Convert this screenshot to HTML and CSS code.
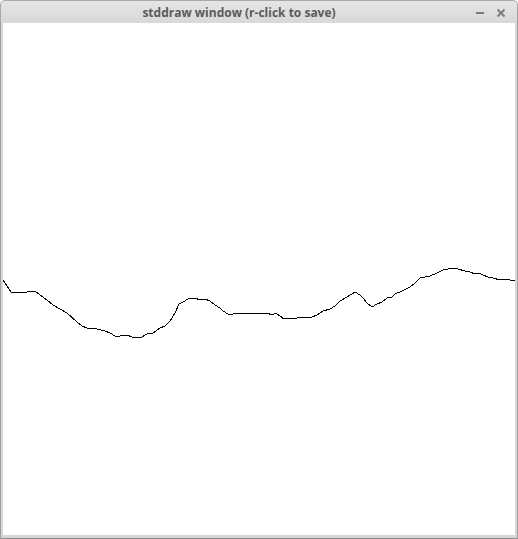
FILE: index.html
```html
<!DOCTYPE html>
<html>
<head>
<meta charset="utf-8">
<link rel="stylesheet" href="styles.css">
</head>
<body>
<div class="window">
  <div class="titlebar">
    <span class="title">stddraw window (r-click to save)</span>
    <div class="controls">
      <svg class="btn" width="10" height="10" viewBox="0 0 10 10"><rect x="1" y="4" width="8" height="2" fill="#7a7a7a"/></svg>
      <svg class="btn" width="10" height="10" viewBox="0 0 10 10"><path d="M1.5 1.5 L8.5 8.5 M8.5 1.5 L1.5 8.5" stroke="#7a7a7a" stroke-width="1.8" fill="none"/></svg>
    </div>
  </div>
  <div class="body">
    <div class="canvas">
      <svg width="512" height="512" viewBox="0 0 512 512" shape-rendering="crispEdges">
        <polyline fill="none" stroke="#000" stroke-width="1" points="0,257 8,269 17,270 24,269 29,268 33,269 44,277 50,282 57,286 64,290 74,299 79,303 84,305 94,306 102,308 107,310 112,313 117,313 124,312 129,314 137,315 144,311 150,310 157,305 162,303 167,298 172,290 176,281 180,279 185,276 192,275 197,277 202,276 207,278 212,282 217,285 220,288 225,291 230,291 235,290 240,290 247,290 254,290 259,291 264,290 269,292 273,290 277,293 281,296 287,295 294,295 300,294 309,294 314,292 320,288 327,286 332,283 337,278 344,274 352,269 357,272 360,275 364,280 369,284 374,281 379,279 384,275 389,274 392,271 399,268 407,264 412,260 417,255 422,254 427,253 434,250 440,247 445,246 450,245 455,246 462,248 467,249 472,251 476,250 480,252 485,254 490,255 497,257 502,256 507,257 512,257"/>
      </svg>
    </div>
  </div>
</div>
</body>
</html>
```

FILE: styles.css
```css
html, body {
  margin: 0;
  padding: 0;
  background: #ffffff;
}
.window {
  width: 518px;
  height: 539px;
  display: flex;
  flex-direction: column;
  box-sizing: border-box;
}
.titlebar {
  height: 23px;
  flex: none;
  position: relative;
  display: flex;
  align-items: center;
  justify-content: center;
  box-sizing: border-box;
  border: 1px solid #a8a8a8;
  border-bottom: none;
  border-radius: 5px 5px 0 0;
  background: linear-gradient(#e6e6e6, #d8d8d8);
}
.title {
  font-family: "Open Sans", "DejaVu Sans", sans-serif;
  font-weight: bold;
  font-size: 12px;
  color: #5a5a5a;
  margin-left: -40px;
}
.controls {
  position: absolute;
  right: 11px;
  top: 7px;
  display: flex;
  gap: 11px;
}
.btn {
  display: block;
}
.body {
  flex: 1;
  display: flex;
  box-sizing: border-box;
  border-left: 1px solid #a0a0a0;
  border-right: 1px solid #a0a0a0;
  border-bottom: 1px solid #8c8c8c;
  background: #d6d6d6;
  padding: 0 2px 2px 2px;
}
.canvas {
  width: 512px;
  height: 512px;
  background: #ffffff;
}
.canvas svg {
  display: block;
}
```
